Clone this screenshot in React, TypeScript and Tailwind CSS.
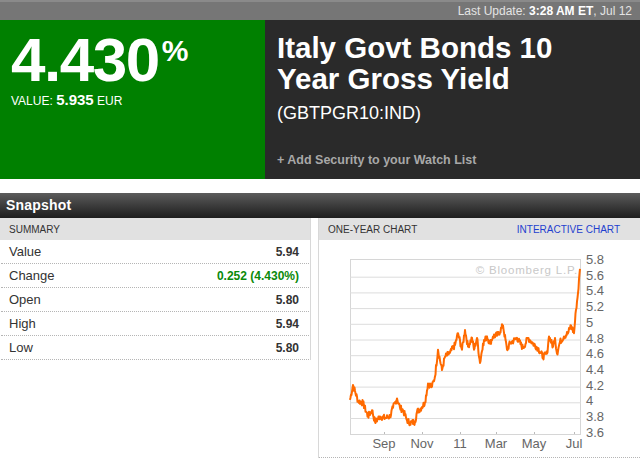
import { useMemo } from 'react';

const keys: [number, number][] = [
  [350, 4.03], [353, 4.22], [358, 4.02], [363, 3.99], [368, 3.82], [372, 3.9], [375, 3.75],
  [380, 3.82], [385, 3.8], [390, 3.82], [393, 3.93], [397, 4.05], [400, 3.93], [403, 3.9],
  [407, 3.77], [410, 3.74], [415, 3.75], [417, 3.88], [422, 3.94], [425, 4.0], [428, 4.24],
  [432, 4.2], [435, 4.33], [438, 4.67], [442, 4.41], [445, 4.58], [450, 4.63], [455, 4.73],
  [458, 4.88], [462, 4.67], [465, 4.92], [468, 4.71], [472, 4.82], [474, 4.67], [477, 4.82],
  [480, 4.5], [483, 4.75], [487, 4.84], [490, 4.75], [493, 4.84], [498, 4.86], [503, 4.98],
  [507, 4.67], [510, 4.75], [517, 4.82], [523, 4.69], [528, 4.82], [533, 4.75], [538, 4.69],
  [543, 4.58], [547, 4.62], [549, 4.84], [553, 4.71], [555, 4.82], [557, 4.62], [560, 4.77],
  [564, 4.84], [568, 4.88], [571, 4.98], [574, 4.88], [576, 5.18], [578, 5.39], [580, 5.7],
];

const levels = ['5.8', '5.6', '5.4', '5.2', '5', '4.8', '4.6', '4.4', '4.2', '4', '3.8', '3.6'];
const months = [
  { label: 'Sep', x: 65 },
  { label: 'Nov', x: 103 },
  { label: '11', x: 141 },
  { label: 'Mar', x: 177 },
  { label: 'May', x: 215 },
  { label: 'Jul', x: 255 },
];

// chart coords are relative to the chart body (abs x - 319, abs y - 240)
const toY = (v: number) => 21 + (5.8 - v) * 78.5;

function Chart() {
  const path = useMemo(() => {
    let seed = 7;
    const rnd = () => {
      seed = (seed * 9301 + 49297) % 233280;
      return seed / 233280 - 0.5;
    };
    const pts: string[] = [];
    for (let i = 0; i < keys.length - 1; i++) {
      const [x0, v0] = keys[i];
      const [x1, v1] = keys[i + 1];
      for (let x = x0; x < x1; x += 0.5) {
        const t = (x - x0) / (x1 - x0);
        let v = v0 + (v1 - v0) * t;
        if (t > 0) v += rnd() * 0.08;
        pts.push(`${(x - 319).toFixed(1)},${toY(v).toFixed(1)}`);
      }
    }
    const last = keys[keys.length - 1];
    pts.push(`${last[0] - 319},${toY(last[1]).toFixed(1)}`);
    return 'M' + pts.join(' L');
  }, []);

  return (
    <svg width="321" height="217" className="block">
      <rect x="31.5" y="19.5" width="230" height="175" fill="white" stroke="#d6d6d6" />
      {levels.slice(1, 11).map((l, i) => (
        <line key={l} x1="31" x2="262" y1={toY(5.6 - i * 0.2) + 0.5} y2={toY(5.6 - i * 0.2) + 0.5} stroke="#dcdcdc" />
      ))}
      {months.map((m) => (
        <line key={m.label} x1={m.x + 0.5} x2={m.x + 0.5} y1="192" y2="194" stroke="#bbb" />
      ))}
      <text x="259" y="34" textAnchor="end" fontSize="11.5" fill="#c8c8c8" letterSpacing="0.8" fontFamily="Liberation Sans, Arial, sans-serif">
        © Bloomberg L.P.
      </text>
      <path d={path} fill="none" stroke="#ff6a00" strokeWidth="2" strokeLinejoin="round" />
      {levels.map((l, i) => (
        <text key={l} x="267" y={21 + i * 15.7 + 3} fontSize="13" fill="#666" fontFamily="Liberation Sans, Arial, sans-serif">
          {l}
        </text>
      ))}
      {months.map((m) => (
        <text key={m.label} x={m.x} y="208" textAnchor="middle" fontSize="13" fill="#666" fontFamily="Liberation Sans, Arial, sans-serif">
          {m.label}
        </text>
      ))}
    </svg>
  );
}

const rows = [
  { label: 'Value', value: '5.94' },
  { label: 'Change', value: '0.252 (4.430%)', green: true },
  { label: 'Open', value: '5.80' },
  { label: 'High', value: '5.94' },
  { label: 'Low', value: '5.80' },
];

export default function App() {
  return (
    <div className="w-[640px] h-[470px] bg-white overflow-hidden font-['Liberation_Sans',Arial,sans-serif]">
      {/* last update bar */}
      <div className="h-[20px] bg-[#767676] border-t-2 border-[#8a8a8a] flex items-center justify-end pr-[8px] text-[12px] text-[#e4e4e4]">
        Last Update:&nbsp;<b className="text-white">3:28 AM ET</b>, Jul 12
      </div>

      {/* header */}
      <div className="flex h-[159px]">
        <div className="w-[265px] bg-[#008000] text-white pl-[11px] pt-[15px]">
          <div className="flex items-start">
            <span className="text-[62px] font-bold leading-[50px] tracking-[-1.5px]">4.430</span>
            <span className="text-[30px] font-bold leading-none mt-[1px] ml-[3px]">%</span>
          </div>
          <div className="leading-[15px] text-[12px] mt-[7px]">
            VALUE: <b className="text-[15px]">5.935</b> EUR
          </div>
        </div>
        <div className="flex-1 bg-[#2a2a2a] pl-[12px] pt-[12px] flex flex-col">
          <div className="text-white font-bold text-[29.5px] leading-[31px]">
            Italy Govt Bonds 10
            <br />
            Year Gross Yield
          </div>
          <div className="text-white text-[18px] leading-[20px] mt-[9px]">(GBTPGR10:IND)</div>
          <div className="text-[#a8a8a8] font-bold text-[12.5px] mt-auto mb-[9px]">
            + Add Security to your Watch List
          </div>
        </div>
      </div>

      <div className="h-[14px]" />

      {/* snapshot bar */}
      <div className="h-[25px] bg-linear-to-b from-[#5c5c5c] to-[#1e1e1e] flex items-center pl-[6px] text-white font-bold text-[14px] tracking-[0.2px]">
        Snapshot
      </div>

      <div className="flex">
        {/* summary */}
        <div className="w-[311px] border-r border-[#d8d8d8] self-start">
          <div className="h-[22px] bg-[#e1e1e1] flex items-center pl-[9px] text-[10px] text-[#333]">SUMMARY</div>
          {rows.map((r) => (
            <div
              key={r.label}
              className="h-[24px] mx-[1px] border-b border-dotted border-[#b5b5b5] flex items-center justify-between pl-[8px] pr-[10px]"
            >
              <span className="text-[13px] text-[#333]">{r.label}</span>
              <span className={`text-[12px] font-bold ${r.green ? 'text-[#0a8a0a]' : 'text-[#333]'}`}>{r.value}</span>
            </div>
          ))}
        </div>

        <div className="w-[7px]" />

        {/* chart */}
        <div className="flex-1 border-l border-[#d8d8d8]">
          <div className="h-[22px] bg-[#e1e1e1] flex items-center justify-between pl-[9px] pr-[20px] text-[10px]">
            <span className="text-[#333]">ONE-YEAR CHART</span>
            <span className="text-[#1f3fcf]">INTERACTIVE CHART</span>
          </div>
          <div className="border-b border-dotted border-[#b5b5b5]">
            <Chart />
          </div>
        </div>
      </div>
    </div>
  );
}
